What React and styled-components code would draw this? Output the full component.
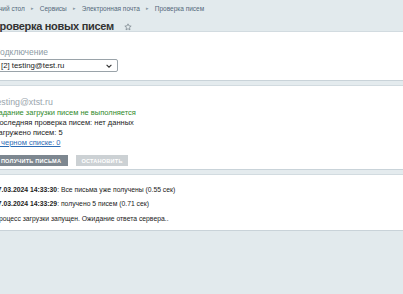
import React from "react";
import styled, { createGlobalStyle } from "styled-components";

const NARROW = `"Liberation Sans Narrow", "Liberation Sans", Arial, sans-serif`;

const Global = createGlobalStyle`
  html, body { margin: 0; padding: 0; }
  body {
    background: #e2eaed;
    font-family: "Liberation Sans", Arial, sans-serif;
    width: 403px;
    height: 294px;
    overflow: hidden;
  }
`;

const Page = styled.div`
  margin-left: -6px;
  width: 420px;
`;

const Header = styled.div`
  padding-top: 3px;
  height: 31px;
  box-sizing: border-box;
`;

const Crumbs = styled.div`
  display: flex;
  align-items: center;
  margin-left: -10px;
  font-family: ${NARROW};
  font-size: 6.5px;
  color: #53697a;
  height: 10px;
`;

const Crumb = styled.span`
  white-space: nowrap;
`;

const Sep = styled.span`
  font-size: 5px;
  color: #8796a2;
  margin: 0 6px;
`;

const TitleRow = styled.div`
  display: flex;
  align-items: center;
  gap: 10px;
  margin-top: 6px;
  margin-left: -2px;
`;

const Title = styled.h1`
  margin: 0;
  font-family: ${NARROW};
  font-size: 11px;
  font-weight: bold;
  letter-spacing: -0.3px;
  color: #333;
  white-space: nowrap;
  line-height: 15px;
`;

const Panel = styled.section`
  background: #fff;
  border-top: 1px solid #d2dbe0;
  border-bottom: 1px solid #c9d3d9;
  padding: ${(p) => p.$pad};
  box-sizing: border-box;
  height: ${(p) => p.$h}px;
`;

const Band = styled.div`
  height: 4px;
  background: #e4ebee;
`;

const Label = styled.div`
  color: #8c9aa4;
  font-size: 8.5px;
  line-height: 10px;
`;

const Select = styled.div`
  display: flex;
  align-items: center;
  justify-content: space-between;
  width: 124px;
  height: 13px;
  box-sizing: border-box;
  border: 1px solid #9aa3a9;
  border-radius: 2px;
  margin-top: 2px;
  padding: 0 5px 0 6px;
  font-family: ${NARROW};
  font-size: 7.8px;
  color: #222;
  background: #fff;
`;

const Account = styled.div`
  color: #9aa5ad;
  font-size: 8.8px;
  line-height: 11px;
`;

const Line = styled.div`
  font-family: ${NARROW};
  font-size: 7.5px;
  line-height: 10px;
  color: ${(p) => p.$color || "#222"};
  white-space: nowrap;
`;

const Link = styled.a`
  font-family: ${NARROW};
  font-size: 7.5px;
  line-height: 10px;
  color: #2c6bb5;
  text-decoration: underline;
  display: block;
`;

const Buttons = styled.div`
  display: flex;
  gap: 8px;
  margin-top: 7px;
`;

const Button = styled.button`
  font-family: "Liberation Sans", Arial, sans-serif;
  font-size: 5.6px;
  font-weight: bold;
  letter-spacing: 0.2px;
  color: #fff;
  border: none;
  height: 11px;
  padding: 0;
  width: ${(p) => p.$w}px;
  background: ${(p) => (p.$disabled ? "#ccd1d4" : "#7d8790")};
  text-transform: uppercase;
`;

const LogLine = styled.div`
  font-family: ${NARROW};
  font-size: 6.8px;
  line-height: 14.3px;
  color: #222;
  white-space: nowrap;
  b { font-weight: bold; }
`;

export default function App() {
  return (
    <>
      <Global />
      <Page>
        <Header>
          <Crumbs>
            <Crumb>Рабочий стол</Crumb>
            <Sep>▸</Sep>
            <Crumb>Сервисы</Crumb>
            <Sep>▸</Sep>
            <Crumb>Электронная почта</Crumb>
            <Sep>▸</Sep>
            <Crumb>Проверка писем</Crumb>
          </Crumbs>
          <TitleRow>
            <Title>Проверка новых писем</Title>
            <svg width="8" height="8" viewBox="0 0 24 24" fill="none" stroke="#7f8a92" strokeWidth="2.4" strokeLinejoin="round">
              <path d="M12 2.5l2.9 6.2 6.6.7-5 4.5 1.4 6.6L12 17.2l-5.9 3.3 1.4-6.6-5-4.5 6.6-.7z" />
            </svg>
          </TitleRow>
        </Header>
        <Panel $h={50} $pad="15px 0 0 0">
          <Label>Подключение</Label>
          <Select>
            <span>[2] testing@test.ru</span>
            <svg width="6" height="4" viewBox="0 0 10 6" fill="none" stroke="#333" strokeWidth="1.8">
              <path d="M1 1l4 4 4-4" />
            </svg>
          </Select>
        </Panel>
        <Band />
        <Panel $h={85} $pad="11px 0 0 0">
          <Account>testing@xtst.ru</Account>
          <Line $color="#2f8a2a">Задание загрузки писем не выполняется</Line>
          <Line>Последняя проверка писем: нет данных</Line>
          <Line>Загружено писем: 5</Line>
          <Link href="#">В черном списке: 0</Link>
          <Buttons>
            <Button $w={74}>Получить письма</Button>
            <Button $w={52} $disabled>Остановить</Button>
          </Buttons>
        </Panel>
        <Band />
        <Panel $h={57} $pad="8px 0 0 0">
          <LogLine><b>17.03.2024 14:33:30</b>: Все письма уже получены (0.55 сек)</LogLine>
          <LogLine><b>17.03.2024 14:33:29</b>: получено 5 писем (0.71 сек)</LogLine>
          <LogLine>Процесс загрузки запущен. Ожидание ответа сервера..</LogLine>
        </Panel>
      </Page>
    </>
  );
}
